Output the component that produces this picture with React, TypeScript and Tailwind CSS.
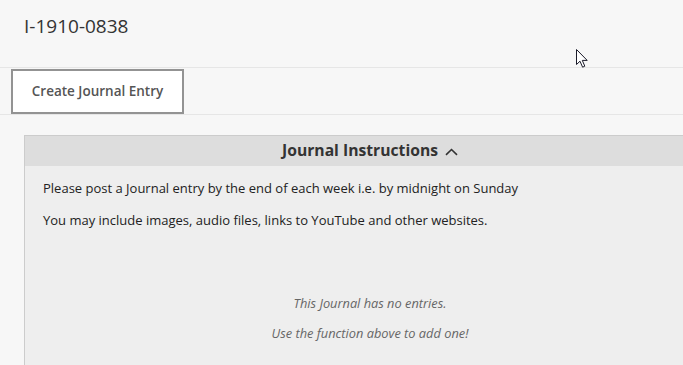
export default function App() {
  return (
    <div
      className="relative h-[365px] w-[683px] overflow-hidden bg-[#f7f7f7]"
      style={{ fontFamily: '"Open Sans", sans-serif' }}
    >
      {/* page title */}
      <div className="flex h-[68px] items-start border-b border-[#e6e6e6] pl-[24px] pt-[13px]">
        <h1 className="text-[19px] leading-[26px] text-[#333]">I-1910-0838</h1>
      </div>

      {/* action bar */}
      <div className="flex border-b border-[#e6e6e6] pl-[11px] pt-[1px]">
        <button className="h-[45px] w-[173px] border-2 border-[#939393] bg-white text-[13.5px] font-semibold text-[#555]">
          Create Journal Entry
        </button>
      </div>

      {/* instructions panel */}
      <div className="ml-[24px] mt-[20px] w-[692px] border border-[#cccccc] bg-[#eeeeee]">
        <div className="flex h-[30px] items-center justify-center gap-[7px] bg-[#dddddd]">
          <span className="text-[15.7px] font-bold text-[#333]">Journal Instructions</span>
          <svg width="13" height="8" viewBox="0 0 13 8" className="mt-[1px]">
            <path d="M1 6.8 L6.5 1.5 L12 6.8" fill="none" stroke="#333" strokeWidth="1.6" />
          </svg>
        </div>
        <div className="px-[18px] pt-[13px] text-[13px] leading-[18px] text-[#222]">
          <p className="mb-[14px]">Please post a Journal entry by the end of each week i.e. by midnight on Sunday</p>
          <p>You may include images, audio files, links to YouTube and other websites.</p>
        </div>
        <div className="flex flex-col items-center gap-[13px] pt-[66px] pb-[40px] text-[12.8px] italic leading-[17px] text-[#666]">
          <p>This Journal has no entries.</p>
          <p>Use the function above to add one!</p>
        </div>
      </div>

      {/* mouse pointer */}
      <svg className="absolute left-[576px] top-[49px]" width="13" height="20" viewBox="0 0 13 20">
        <path
          d="M0.5 0.5 L0.5 15.5 L4 12.2 L6.6 18.2 L8.8 17.2 L6.3 11.4 L11.2 11.4 Z"
          fill="#fff"
          stroke="#1b1b2a"
          strokeWidth="1"
          strokeLinejoin="round"
        />
      </svg>
    </div>
  );
}
